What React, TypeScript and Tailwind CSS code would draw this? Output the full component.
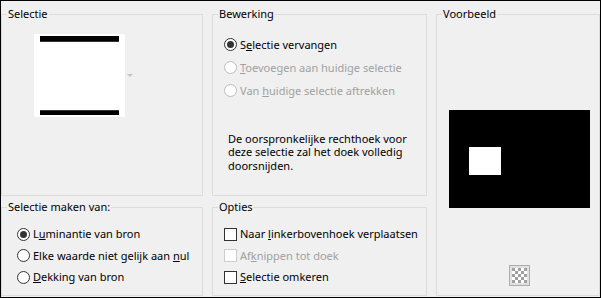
import { FC, ReactNode } from "react";

const Group: FC<{ title: string; className?: string; children?: ReactNode }> = ({
  title,
  className = "",
  children,
}) => (
  <div className={`relative border border-[#dcdcdc] ${className}`}>
    <span className="absolute left-[5px] top-[-9px] whitespace-nowrap bg-[#f0f0f0] px-[1px] leading-[16px] text-black">
      {title}
    </span>
    {children}
  </div>
);

const Radio: FC<{ checked?: boolean; disabled?: boolean; children: ReactNode }> = ({
  checked,
  disabled,
  children,
}) => (
  <div className="flex h-[21.5px] items-center whitespace-nowrap">
    <span
      className={`flex h-[13px] w-[13px] shrink-0 items-center justify-center rounded-full border bg-white ${
        disabled ? "border-[#bcbcbc]" : "border-[#333333]"
      }`}
    >
      {checked && <span className="h-[7px] w-[7px] rounded-full bg-[#333333]" />}
    </span>
    <span className={`ml-[3px] ${disabled ? "text-[#a0a0a0]" : "text-black"}`}>{children}</span>
  </div>
);

const Check: FC<{ disabled?: boolean; children: ReactNode }> = ({ disabled, children }) => (
  <div className="flex h-[21.5px] items-center whitespace-nowrap">
    <span
      className={`h-[13px] w-[13px] shrink-0 border bg-white ${
        disabled ? "border-[#cccccc]" : "border-[#333333]"
      }`}
    />
    <span className={`ml-[3px] ${disabled ? "text-[#a0a0a0]" : "text-black"}`}>{children}</span>
  </div>
);

export default function App() {
  return (
    <div
      className="flex h-[298px] w-[601px] gap-[9px] border border-black bg-[#f0f0f0] pt-[13px] pb-[1px] text-[11px] leading-[16px] text-black"
      style={{ fontFamily: '"Segoe UI", "Noto Sans", sans-serif' }}
    >
      <div className="flex w-[202px] flex-col gap-[11px]">
        <Group title="Selectie" className="h-[182px]">
          <div className="ml-[32px] mt-[19px] flex items-center">
            <div className="flex h-[83px] w-[91px] flex-col justify-between bg-white px-[6px] pt-[2px] pb-[2px]">
              <div className="h-[6px] border-b border-[#333333] bg-black" />
              <div className="h-[5px] border-t border-[#333333] bg-black" />
            </div>
            <svg width="6" height="3" viewBox="0 0 6 3" className="ml-[2px]">
              <path d="M0 0H6L3 3Z" fill="#c4c4c4" />
            </svg>
          </div>
        </Group>
        <Group title="Selectie maken van:" className="h-[89px]">
          <div className="ml-[15px] pt-[15.5px]">
            <Radio checked>
              L<u>u</u>minantie van bron
            </Radio>
            <Radio>
              Elke waarde niet gelijk aan <u>n</u>ul
            </Radio>
            <Radio>
              <u>D</u>ekking van bron
            </Radio>
          </div>
        </Group>
      </div>

      <div className="flex w-[215px] flex-col gap-[11px]">
        <Group title="Bewerking" className="h-[182px]">
          <div className="ml-[11px] pt-[18px]">
            <div className="flex flex-col [&>div]:h-[23px]">
              <Radio checked>
                S<u>e</u>lectie vervangen
              </Radio>
              <Radio disabled>
                <u>T</u>oevoegen aan huidige selectie
              </Radio>
              <Radio disabled>
                Van <u>h</u>uidige selectie aftrekken
              </Radio>
            </div>
            <p className="mt-[30px] ml-[4px] w-[190px] leading-[13.3px]">
              De oorspronkelijke rechthoek voor
              <br />
              deze selectie zal het doek volledig
              <br />
              doorsnijden.
            </p>
          </div>
        </Group>
        <Group title="Opties" className="h-[89px]">
          <div className="ml-[11px] pt-[15.5px]">
            <Check>
              Naar <u>l</u>inkerbovenhoek verplaatsen
            </Check>
            <Check disabled>
              Af<u>k</u>nippen tot doek
            </Check>
            <Check>
              <u>S</u>electie omkeren
            </Check>
          </div>
        </Group>
      </div>

      <Group title="Voorbeeld" className="h-[282px] w-[164px]">
        <div className="ml-[12px] mt-[95px] h-[98px] w-[141px] bg-black pl-[20px] pt-[37px]">
          <div className="h-[28px] w-[32px] bg-white" />
        </div>
        <div className="ml-[72px] mt-[57px] flex h-[21px] w-[21px] items-center justify-center border border-[#adadad] bg-[#e1e1e1]">
          <svg width="15" height="15" viewBox="0 0 15 15">
            <rect width="15" height="15" fill="#ffffff" />
            {[0, 1, 2, 3, 4].map((r) =>
              [0, 1, 2, 3, 4].map((c) =>
                (r + c) % 2 === 0 ? (
                  <rect key={`${r}-${c}`} x={c * 3} y={r * 3} width="3" height="3" fill="#a0a0a0" />
                ) : null
              )
            )}
          </svg>
        </div>
      </Group>
    </div>
  );
}
